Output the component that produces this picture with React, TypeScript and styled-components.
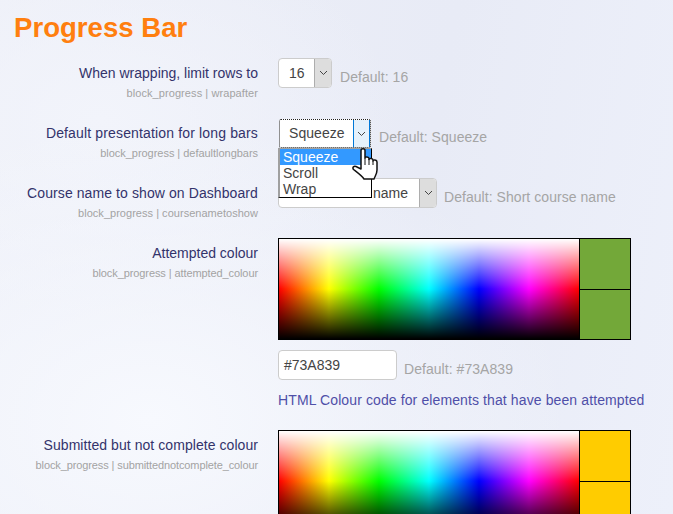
import React from "react";
import styled, { createGlobalStyle } from "styled-components";

const GlobalStyle = createGlobalStyle`
  html, body {
    margin: 0;
    height: 100%;
    overflow: hidden;
  }
  body {
    font-family: "Liberation Sans", Arial, sans-serif;
    background:
      radial-gradient(ellipse 420px 300px at 150px 420px, #f7f9fe 0%, rgba(247,249,254,0) 100%),
      radial-gradient(ellipse 300px 200px at 100px 120px, #f2f4fb 0%, rgba(242,244,251,0) 100%),
      linear-gradient(100deg, #eef0f8 0%, #e8ebf6 60%, #edf0fa 100%);
  }
`;

const Page = styled.div`
  width: 673px;
  height: 514px;
  overflow: hidden;
`;

const Title = styled.h2`
  margin: 0;
  padding: 13px 0 0 14px;
  height: 58px;
  box-sizing: border-box;
  font-size: 27.6px;
  line-height: 30px;
  font-weight: bold;
  color: #ff7f0f;
`;

const Row = styled.div<{ $gap: number }>`
  display: grid;
  grid-template-columns: 258px 1fr;
  column-gap: 20px;
  margin-bottom: ${(p) => p.$gap}px;
`;

const LabelCol = styled.div`
  text-align: right;
  padding-top: 7px;
`;

const Label = styled.div<{ $track?: number }>`
  font-size: 14px;
  line-height: 16px;
  color: #33336b;
  letter-spacing: ${(p) => p.$track ?? 0}px;
`;

const SettingName = styled.div<{ $track?: number }>`
  font-size: 11px;
  line-height: 12px;
  margin-top: 6px;
  color: #a3a3a3;
  letter-spacing: ${(p) => p.$track ?? 0}px;
`;

const Control = styled.div`
  display: flex;
  align-items: flex-start;
  position: relative;
`;

const Stack = styled.div`
  display: flex;
  flex-direction: column;
`;

const SelectBox = styled.div<{ $width: number; $focused?: boolean }>`
  width: ${(p) => p.$width}px;
  height: 30px;
  box-sizing: border-box;
  display: flex;
  background: #fff;
  font-size: 14px;
  line-height: 28px;
  color: #444;
  border-radius: 4px;
  border: 1px solid #ccc;
  ${(p) => p.$focused && `
    border: 1px dotted #222;
    border-radius: 2px;
    height: 29px;
    margin: 1px 0 0 1px;
    line-height: 27px;
  `}
`;

const SelectValue = styled.div<{ $focused?: boolean }>`
  flex: 1;
  padding-left: ${(p) => (p.$focused ? 9 : 10)}px;
  white-space: nowrap;
  letter-spacing: 0.05px;
`;

const Arrow = styled.div<{ $focused?: boolean }>`
  width: 17px;
  flex: none;
  display: flex;
  align-items: center;
  justify-content: center;
  box-sizing: border-box;
  background: ${(p) => (p.$focused ? "#e5f1fb" : "#ddd")};
  border-left: 1px solid ${(p) => (p.$focused ? "#0078d7" : "#adadad")};
  ${(p) => p.$focused && "border-right: 1px solid #0078d7;"}
  border-radius: ${(p) => (p.$focused ? "0" : "0 3px 3px 0")};
`;

const DefaultText = styled.span<{ $left?: number }>`
  font-size: 14px;
  line-height: 16px;
  color: #a5a5a5;
  margin: 11px 0 0 ${(p) => p.$left ?? 8}px;
  white-space: nowrap;
  letter-spacing: 0.05px;
`;

const Dropdown = styled.div`
  position: absolute;
  left: 0;
  top: 30px;
  width: 94px;
  box-sizing: border-box;
  background: #fff;
  border: 1px solid #000;
  border-top: 1px solid #a0a0a0;
  border-left: 2px solid #a0a0a0;
  font-size: 14px;
  line-height: 16px;
  color: #444;
  z-index: 2;
`;

const Option = styled.div<{ $active?: boolean }>`
  height: 16px;
  padding-left: 3px;
  background: ${(p) => (p.$active ? "#3399ff" : "transparent")};
  color: ${(p) => (p.$active ? "#fff" : "#444")};
`;

const Cursor = styled.svg`
  position: absolute;
  left: 74px;
  top: 29px;
  z-index: 3;
`;

const Picker = styled.div`
  display: flex;
  width: 353px;
  height: 102px;
  box-sizing: border-box;
  border: 1px solid #000;
`;

const Spectrum = styled.div`
  width: 300px;
  height: 100px;
  flex: none;
  background:
    linear-gradient(to bottom, #fff 0%, rgba(255,255,255,0) 50%, rgba(0,0,0,0) 50%, #000 100%),
    linear-gradient(to right, #f00 0%, #ff0 16.67%, #0f0 33.33%, #0ff 50%, #00f 66.67%, #f0f 83.33%, #f00 100%);
`;

const Swatches = styled.div`
  flex: 1;
  display: flex;
  flex-direction: column;
  border-left: 1px solid #000;
`;

const Swatch = styled.div<{ $color: string; $divider?: boolean }>`
  flex: 1;
  background: ${(p) => p.$color};
  ${(p) => p.$divider && "border-top: 1px solid #000;"}
`;

const HexRow = styled.div`
  display: flex;
  align-items: flex-start;
  margin-top: 10px;
`;

const HexInput = styled.div`
  width: 119px;
  height: 30px;
  box-sizing: border-box;
  padding-left: 5px;
  background: #fff;
  border: 1px solid #ccc;
  border-radius: 4px;
  font-size: 14px;
  line-height: 28px;
  color: #444;
`;

const Description = styled.div`
  margin-top: 12px;
  font-size: 14px;
  line-height: 16px;
  color: #4f4fa8;
  white-space: nowrap;
  letter-spacing: 0.11px;
`;

const Chevron = () => (
  <svg width="9" height="6" viewBox="0 0 9 6" fill="none">
    <path d="M1 1l3.5 3.5L8 1" stroke="#444" strokeWidth="1" />
  </svg>
);

const HandCursor = () => (
  <Cursor width="27" height="34" viewBox="0 0 27 34">
    <path
      d="M9 3.5C9 1 13 1 13 3.5V11C13 9.5 17 9.5 17 11.5V12.5C17 11 21 11 21 13V14C21 12.5 25 12.5 25 15V23C25 27 23 29 22 32H12C10 29 6 26 1.5 22.5C0 20.5 2 18.5 4 19.5L9 22Z"
      fill="#fff"
      stroke="#111"
      strokeWidth="1.5"
      strokeLinejoin="round"
    />
    <path d="M13 11V18M17 12V18M21 14V18" stroke="#111" strokeWidth="1" />
  </Cursor>
);

const ColourSetting = ({
  label,
  name,
  colour,
  description,
  track,
  nameTrack,
}: {
  label: string;
  name: string;
  colour: string;
  description?: string;
  track?: number;
  nameTrack?: number;
}) => (
  <Row $gap={22}>
    <LabelCol>
      <Label $track={track}>{label}</Label>
      <SettingName $track={nameTrack}>{name}</SettingName>
    </LabelCol>
    <Stack>
      <Picker>
        <Spectrum />
        <Swatches>
          <Swatch $color={colour} />
          <Swatch $color={colour} $divider />
        </Swatches>
      </Picker>
      {description && (
        <>
          <HexRow>
            <HexInput>{colour}</HexInput>
            <DefaultText $left={7}>Default: {colour}</DefaultText>
          </HexRow>
          <Description>{description}</Description>
        </>
      )}
    </Stack>
  </Row>
);

export default function App() {
  return (
    <Page>
      <GlobalStyle />
      <Title>Progress Bar</Title>
      <Row $gap={19}>
        <LabelCol>
          <Label>When wrapping, limit rows to</Label>
          <SettingName $track={0.08}>block_progress | wrapafter</SettingName>
        </LabelCol>
        <Control>
          <SelectBox $width={54}>
            <SelectValue>16</SelectValue>
            <Arrow>
              <Chevron />
            </Arrow>
          </SelectBox>
          <DefaultText>Default: 16</DefaultText>
        </Control>
      </Row>
      <Row $gap={19}>
        <LabelCol>
          <Label $track={0.15}>Default presentation for long bars</Label>
          <SettingName $track={-0.03}>block_progress | defaultlongbars</SettingName>
        </LabelCol>
        <Control>
          <SelectBox $width={92} $focused>
            <SelectValue $focused>Squeeze</SelectValue>
            <Arrow $focused>
              <Chevron />
            </Arrow>
          </SelectBox>
          <DefaultText>Default: Squeeze</DefaultText>
          <Dropdown>
            <Option $active>Squeeze</Option>
            <Option>Scroll</Option>
            <Option>Wrap</Option>
          </Dropdown>
          <HandCursor />
        </Control>
      </Row>
      <Row $gap={19}>
        <LabelCol>
          <Label $track={0.09}>Course name to show on Dashboard</Label>
          <SettingName $track={0.03}>block_progress | coursenametoshow</SettingName>
        </LabelCol>
        <Control>
          <SelectBox $width={159}>
            <SelectValue>Short course name</SelectValue>
            <Arrow>
              <Chevron />
            </Arrow>
          </SelectBox>
          <DefaultText $left={7}>Default: Short course name</DefaultText>
        </Control>
      </Row>
      <ColourSetting
        label="Attempted colour"
        name="block_progress | attempted_colour"
        nameTrack={-0.09}
        colour="#73A839"
        description="HTML Colour code for elements that have been attempted"
      />
      <ColourSetting
        label="Submitted but not complete colour"
        name="block_progress | submittednotcomplete_colour"
        nameTrack={-0.11}
        colour="#FFCC00"
        track={0.06}
      />
    </Page>
  );
}
